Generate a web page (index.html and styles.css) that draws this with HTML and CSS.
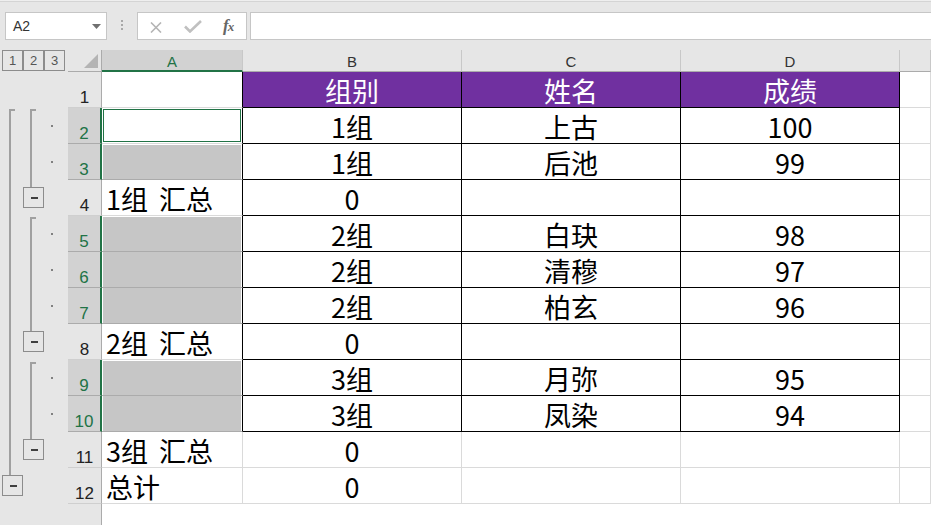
FILE: index.html
```html
<!DOCTYPE html>
<html lang="zh-CN">
    <head>
        <meta charset="utf-8" />
        <title>分类汇总</title>
        <link rel="stylesheet" href="styles.css">
    </head>
    <body>
        <div class="topbar">
            <div class="namebox">
                <span>A2</span>
                <svg class="drop" width="9" height="5" viewBox="0 0 9 5"><path d="M0 0h9L4.5 5z" fill="#707070"/></svg>
            </div>
            <svg class="grip" width="4" height="12" viewBox="0 0 4 12"><rect x="1" y="0" width="2" height="2" fill="#a8a8a8"/><rect x="1" y="4" width="2" height="2" fill="#a8a8a8"/><rect x="1" y="8" width="2" height="2" fill="#a8a8a8"/></svg>
            <div class="fbtns">
                <svg width="12" height="11" viewBox="0 0 12 11"><path d="M1 0.5l10 10M11 0.5l-10 10" stroke="#b4b4b4" stroke-width="1.6" fill="none"/></svg>
                <svg width="18" height="13" viewBox="0 0 18 13"><path d="M1 6.5l5 5L17 1" stroke="#c0c0c0" stroke-width="2.6" fill="none"/></svg>
                <i class="fx">f<span>x</span></i>
            </div>
            <div class="finput"></div>
        </div>

        <div class="sheet">
            <div class="levels"><span>1</span><span>2</span><span>3</span></div>
            <div class="corner"><svg width="14" height="14" viewBox="0 0 14 14"><path d="M14 0V14H0z" fill="#b4b4b4"/></svg></div>
            <div class="ch on">A</div>
            <div class="ch">B</div>
            <div class="ch">C</div>
            <div class="ch">D</div>
            <div class="ch"></div>

            <div class="gutter">
                <svg width="68" height="453" viewBox="0 72 68 453">
                    <g fill="#a0a0a0">
                        <rect x="9" y="109" width="2" height="366"/><rect x="9" y="109" width="6" height="2"/>
                        <rect x="30" y="109" width="2" height="78"/><rect x="30" y="109" width="6" height="2"/>
                        <rect x="30" y="217" width="2" height="114"/><rect x="30" y="217" width="6" height="2"/>
                        <rect x="30" y="362" width="2" height="77"/><rect x="30" y="362" width="6" height="2"/>
                    </g>
                    <g fill="#808080">
                        <rect x="51" y="125" width="2" height="2"/><rect x="51" y="161" width="2" height="2"/>
                        <rect x="51" y="233" width="2" height="2"/><rect x="51" y="269" width="2" height="2"/><rect x="51" y="305" width="2" height="2"/>
                        <rect x="51" y="377" width="2" height="2"/><rect x="51" y="413" width="2" height="2"/>
                    </g>
                    <g fill="#e6e6e6" stroke="#8c8c8c">
                        <rect x="23.5" y="187.5" width="20" height="20"/>
                        <rect x="23.5" y="331.5" width="20" height="20"/>
                        <rect x="23.5" y="439.5" width="20" height="20"/>
                        <rect x="2.5" y="475.5" width="20" height="20"/>
                    </g>
                    <g fill="#404040">
                        <rect x="31" y="197" width="7" height="2"/>
                        <rect x="31" y="341" width="7" height="2"/>
                        <rect x="31" y="449" width="7" height="2"/>
                        <rect x="10" y="485" width="7" height="2"/>
                    </g>
                </svg>
            </div>

            <div class="rh">1</div>
            <div class="c br"></div>
            <div class="c bk hd">组别</div>
            <div class="c bk hd">姓名</div>
            <div class="c bk hd">成绩</div>
            <div class="c"></div>

            <div class="rh on">2</div>
            <div class="c br act"></div>
            <div class="c bk">1组</div>
            <div class="c bk">上古</div>
            <div class="c bk">100</div>
            <div class="c"></div>

            <div class="rh on">3</div>
            <div class="c br sel top"></div>
            <div class="c bk">1组</div>
            <div class="c bk">后池</div>
            <div class="c bk">99</div>
            <div class="c"></div>

            <div class="rh">4</div>
            <div class="c br l">1组 汇总</div>
            <div class="c bk">0</div>
            <div class="c bk"></div>
            <div class="c bk"></div>
            <div class="c"></div>

            <div class="rh on">5</div>
            <div class="c br sel top"></div>
            <div class="c bk">2组</div>
            <div class="c bk">白玦</div>
            <div class="c bk">98</div>
            <div class="c"></div>

            <div class="rh on">6</div>
            <div class="c br sel"></div>
            <div class="c bk">2组</div>
            <div class="c bk">清穆</div>
            <div class="c bk">97</div>
            <div class="c"></div>

            <div class="rh on">7</div>
            <div class="c br sel"></div>
            <div class="c bk">2组</div>
            <div class="c bk">柏玄</div>
            <div class="c bk">96</div>
            <div class="c"></div>

            <div class="rh">8</div>
            <div class="c br l">2组 汇总</div>
            <div class="c bk">0</div>
            <div class="c bk"></div>
            <div class="c bk"></div>
            <div class="c"></div>

            <div class="rh on">9</div>
            <div class="c br sel top"></div>
            <div class="c bk">3组</div>
            <div class="c bk">月弥</div>
            <div class="c bk">95</div>
            <div class="c"></div>

            <div class="rh on">10</div>
            <div class="c br sel"></div>
            <div class="c bk">3组</div>
            <div class="c bk">凤染</div>
            <div class="c bk">94</div>
            <div class="c"></div>

            <div class="rh">11</div>
            <div class="c l">3组 汇总</div>
            <div class="c">0</div>
            <div class="c"></div>
            <div class="c"></div>
            <div class="c"></div>

            <div class="rh">12</div>
            <div class="c l">总计</div>
            <div class="c">0</div>
            <div class="c"></div>
            <div class="c"></div>
            <div class="c"></div>

            <div class="rh rest"></div>
            <div class="blank"></div>
        </div>
    </body>
</html>
```

FILE: styles.css
```css
* { margin: 0; padding: 0; box-sizing: border-box; }
html, body { width: 931px; height: 525px; overflow: hidden; }
body { font: 14px 'Liberation Sans', Arial, sans-serif; color: #333; background: #e6e6e6; }

.topbar { height: 50px; display: flex; align-items: flex-start; padding-top: 12px; background: linear-gradient(#eeeeee 0 1px, #d4d4d4 1px 2px, #e6e6e6 2px); }
.namebox { position: relative; margin-left: 5px; width: 102px; height: 28px; border: 1px solid #c6c6c6; background: #fff; display: flex; align-items: center; padding-left: 7px; font-size: 14px; color: #333; }
.namebox .drop { position: absolute; right: 5px; top: 11px; }
.grip { margin: 8px 0 0 13px; }
.fbtns { margin-left: 13px; width: 110px; height: 28px; border: 1px solid #c6c6c6; background: #fff; display: flex; align-items: center; padding-left: 12px; }
.fbtns svg:first-child { margin-top: 2px; }
.fbtns svg + svg { margin-left: 22px; margin-top: 1px; }
.fx { margin-left: 21px; font: italic bold 17px 'Liberation Serif', serif; color: #666; letter-spacing: -1px; }
.fx span { font-size: 13px; }
.finput { margin-left: 3px; flex: 1; height: 28px; border: 1px solid #c6c6c6; border-right: 0; background: #fff; }

.sheet { display: grid; grid-template-columns: 68px 34px 141px 219px 219px 219px 1fr; grid-template-rows: 22px repeat(12, 36px) 1fr; height: 475px; }

.levels { display: flex; padding-left: 2px; }
.levels span { width: 21px; height: 21px; border: 1px solid #8c8c8c; display: flex; align-items: center; justify-content: center; font-size: 13px; color: #555; }
.corner { border-right: 1px solid #ababab; border-bottom: 1px solid #ababab; display: flex; justify-content: flex-end; align-items: flex-start; padding: 4px 3px 0 0; }

.ch { background: #e6e6e6; border-right: 1px solid #c8c8c8; border-bottom: 1px solid #ababab; display: flex; align-items: center; justify-content: center; padding-top: 2px; font-size: 15px; color: #333; }
.ch.on { background: #d2d2d2; border-bottom: 2px solid #217346; color: #217346; }

.gutter { grid-row: 2 / -1; grid-column: 1; }
.gutter svg { display: block; }

.rh { background: #e6e6e6; border-right: 1px solid #ababab; border-bottom: 1px solid #cfcfcf; display: flex; align-items: flex-end; justify-content: center; padding-bottom: 1px; font-size: 17px; line-height: 17px; color: #222; }
.rh.on { background: #d2d2d2; border-right: 2px solid #217346; border-bottom-color: #ababab; color: #217346; }
.rh.rest { border-bottom: 0; }

.c { background: #fff; border-right: 1px solid #dadada; border-bottom: 1px solid #dadada; display: flex; align-items: flex-end; justify-content: center; padding-bottom: 3px; font: 27px/27px 'Noto Sans CJK SC', sans-serif; color: #000; white-space: nowrap; }
.c.l { justify-content: flex-start; padding-left: 4px; word-spacing: 5px; }
.c.br { border-right-color: #000; }
.c.bk { border-right-color: #000; border-bottom-color: #000; }
.c.hd { background: #7030a0; color: #fff; }
.c.sel { background: #c6c6c6; border-bottom-color: #ababab; box-shadow: inset 1px 0 #fff, inset -1px 0 #fff; }
.c.sel.top { box-shadow: inset 1px 0 #fff, inset -1px 0 #fff, inset 0 1px #fff; }
.c.act { box-shadow: inset 0 0 0 1px #fff, inset 0 0 0 2px #217346; }

.blank { grid-column: 3 / -1; background: #fff; }
```
